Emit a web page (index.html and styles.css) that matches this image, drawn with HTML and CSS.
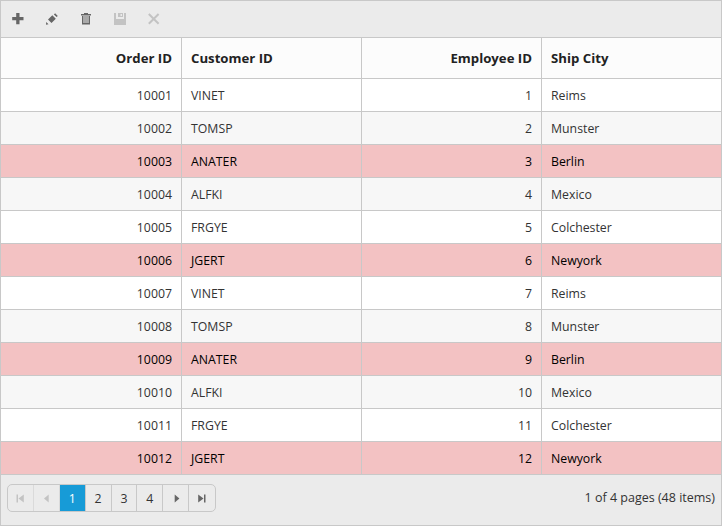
FILE: index.html
```html
<!DOCTYPE html>
<html lang="en">
<head>
<meta charset="utf-8">
<title>Orders</title>
<link rel="stylesheet" href="styles.css">
</head>
<body>
<div class="grid">
  <div class="toolbar">
    <svg class="tool" viewBox="0 0 14 14"><path d="M5.200 1h3.300v4h4v3.300h-4v4H5.200v-4h-4V5h4z"/></svg>
    <svg class="tool" viewBox="0 0 14 14"><path d="M7.300 3.300l3.500 3.500-4.300 4.300L3 7.600zM8.900 2.400l1.200-1.200 2.700 2.700-1.200 1.200zM1.200 9.900l2.300 2.300-2.500.500z"/></svg>
    <svg class="tool" viewBox="0 0 14 14"><path d="M5 1h4v1h3v1.500H2V2h3zM3 4h8v8.500H3zM4.500 4v7h1V4zm2 0v7h1V4zm2 0v7h1V4z" fill-rule="evenodd"/></svg>
    <svg class="tool off" viewBox="0 0 14 14"><path d="M1 1h2v6h8V1h2v12H1zM5 1h5v4H5zM7.500 2v2H9V2z" fill-rule="evenodd"/></svg>
    <svg class="tool off" viewBox="0 0 14 14"><path class="cross" d="M1.800 2l9.800 9.800M11.600 2l-9.800 9.800"/></svg>
  </div>
  <table>
    <thead><tr><th class="num">Order ID</th><th>Customer ID</th><th class="num">Employee ID</th><th>Ship City</th></tr></thead>
    <tbody>
      <tr><td class="num">10001</td><td>VINET</td><td class="num">1</td><td>Reims</td></tr>
      <tr><td class="num">10002</td><td>TOMSP</td><td class="num">2</td><td>Munster</td></tr>
      <tr class="mark"><td class="num">10003</td><td>ANATER</td><td class="num">3</td><td>Berlin</td></tr>
      <tr><td class="num">10004</td><td>ALFKI</td><td class="num">4</td><td>Mexico</td></tr>
      <tr><td class="num">10005</td><td>FRGYE</td><td class="num">5</td><td>Colchester</td></tr>
      <tr class="mark"><td class="num">10006</td><td>JGERT</td><td class="num">6</td><td>Newyork</td></tr>
      <tr><td class="num">10007</td><td>VINET</td><td class="num">7</td><td>Reims</td></tr>
      <tr><td class="num">10008</td><td>TOMSP</td><td class="num">8</td><td>Munster</td></tr>
      <tr class="mark"><td class="num">10009</td><td>ANATER</td><td class="num">9</td><td>Berlin</td></tr>
      <tr><td class="num">10010</td><td>ALFKI</td><td class="num">10</td><td>Mexico</td></tr>
      <tr><td class="num">10011</td><td>FRGYE</td><td class="num">11</td><td>Colchester</td></tr>
      <tr class="mark"><td class="num">10012</td><td>JGERT</td><td class="num">12</td><td>Newyork</td></tr>
    </tbody>
  </table>
  <div class="footer">
    <div class="pager">
      <span class="page off"><svg viewBox="0 0 10 10"><path d="M1.500 1.500H3v8H1.500zM8.800 1.500v8L3.500 5.500z"/></svg></span>
      <span class="page off"><svg viewBox="0 0 10 10"><path d="M7.700 1.500v8L3 5.500z"/></svg></span>
      <span class="page current">1</span>
      <span class="page">2</span>
      <span class="page">3</span>
      <span class="page">4</span>
      <span class="page"><svg viewBox="0 0 10 10"><path d="M3.700 1.500v8l4.700-4z"/></svg></span>
      <span class="page"><svg viewBox="0 0 10 10"><path d="M7 1.500h1.500v8H7zM1.200 1.500v8l5.300-4z"/></svg></span>
    </div>
    <div class="summary">1 of 4 pages (48 items)</div>
  </div>
</div>
</body>
</html>
```
FILE: styles.css
```css
* { box-sizing: border-box; }
body { margin: 0; font-family: "Open Sans", sans-serif; font-size: 12.3px; color: #333; }
.grid { width: 722px; height: 526px; border: 1px solid #c8c8c8; background: #ebebeb; display: flex; flex-direction: column; }
.toolbar { height: 37px; border-bottom: 1px solid #c8c8c8; display: flex; align-items: center; gap: 20px; padding-left: 10px; }
.tool { width: 14px; height: 14px; fill: #666; }
.tool.off { fill: #c3c3c3; }
.cross { stroke: #c3c3c3; stroke-width: 2; }
table { width: 720px; table-layout: fixed; border-collapse: separate; border-spacing: 0; }
th, td { border-right: 1px solid #c8c8c8; border-bottom: 1px solid #c8c8c8; padding: 0 9px; text-align: left; white-space: nowrap; }
th:nth-child(1), td:nth-child(1) { width: 181px; }
th:nth-child(2), th:nth-child(3) { width: 180px; }
th:last-child, td:last-child { border-right: 0; }
th { height: 41px; background: #fcfcfc; font-size: 13.2px; font-weight: 700; color: #222; }
td { height: 33px; background: #fff; }
.num { text-align: right; }
tr:nth-child(even) td { background: #f7f7f7; }
tr.mark td { background: #f3c2c3; color: #000; }
.footer { flex: 1; display: flex; justify-content: space-between; align-items: flex-start; padding: 9px 6px 0; }
.pager { display: flex; width: 209px; height: 28px; border: 1px solid #c8c8c8; border-radius: 5px; overflow: hidden; }
.page { width: 26px; height: 26px; border-right: 1px solid #c8c8c8; display: flex; align-items: center; justify-content: center; }
.page:last-child { border-right: 0; }
.page svg { width: 10px; height: 10px; fill: #666; }
.page.off { border-right-color: #dadada; }
.page.off svg { fill: #c3c3c3; }
.current { background: #179bd7; color: #fff; }
.summary { line-height: 28px; font-size: 12.5px; }
```
